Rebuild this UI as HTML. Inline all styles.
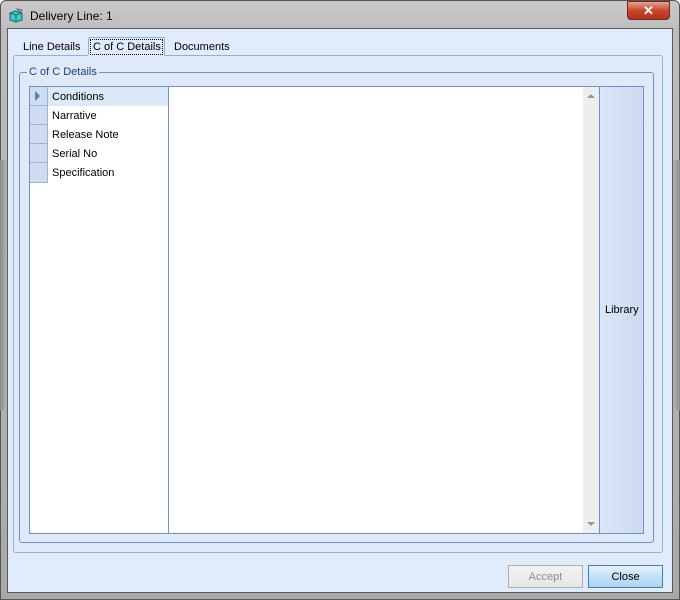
<!DOCTYPE html>
<html><head><style>
*{margin:0;padding:0;box-sizing:border-box}
body{width:680px;height:600px;background:#fff;font-family:"Liberation Sans",sans-serif;font-size:11px;color:#000;position:relative;overflow:hidden}
.abs{position:absolute}
</style></head><body>
<div class="abs" style="left:0;top:0;width:680px;height:600px;background:linear-gradient(#c9c9c9,#bdbdbd 30px,#a9a9a9);border:1px solid #555;border-radius:6px 6px 0 0"></div>
<div class="abs" style="left:0;top:160px;width:8px;height:250px;background:linear-gradient(90deg,#8a8a8a,#bcbcbc)"></div>
<div class="abs" style="left:672px;top:160px;width:8px;height:250px;background:linear-gradient(90deg,#bcbcbc,#8a8a8a)"></div>
<svg class="abs" style="left:8px;top:7px" width="16" height="16" viewBox="0 0 16 16"><path d="M2 6 L7 4 L14 6 L14 13 L8 15 L2 13Z" fill="#3cc9c9" stroke="#1a6b6b"/><path d="M2 6 L8 8 L14 6 M8 8 L8 15" fill="none" stroke="#1a6b6b"/><path d="M9 2 L14 3 L12 5Z" fill="#ddd" stroke="#666"/></svg>
<div class="abs" style="left:30px;top:9px;font-size:12px">Delivery Line: 1</div>
<div class="abs" style="left:627px;top:1px;width:43px;height:19px;background:linear-gradient(#e8a493,#c8462c 50%,#b8301a);border:1px solid #6d2a1e;border-radius:0 0 4px 4px;color:#fff;font-weight:bold;font-size:13px;text-align:center;line-height:17px">✕</div>
<div class="abs" style="left:7px;top:28px;width:666px;height:565px;border:1px solid #5a5a5a;background:#e0ebfb"></div>
<div class="abs" style="left:23px;top:41px">Line Details</div>
<div class="abs" style="left:88px;top:37px;width:77px;height:19px;background:#e0ebfb;border:1px solid #8eb0dd;border-bottom:none;border-radius:2px 2px 0 0"></div>
<div class="abs" style="left:90px;top:39px;width:73px;height:16px;border:1px dotted #000"></div>
<div class="abs" style="left:93px;top:41px">C of C Details</div>
<div class="abs" style="left:174px;top:41px">Documents</div>
<div class="abs" style="left:13px;top:55px;width:650px;height:498px;border:1px solid #8eb0dd;border-radius:3px;background:#dfe9f8"></div>
<div class="abs" style="left:88px;top:55px;width:76px;height:1px;background:#e0ebfb"></div>
<div class="abs" style="left:19px;top:72px;width:635px;height:471px;border:1px solid #6a93cf;border-radius:3px"></div>
<div class="abs" style="left:27px;top:66px;padding:0 2px;background:#dfe9f8;color:#1e3f7a">C of C Details</div>
<div class="abs" style="left:29px;top:86px;width:615px;height:448px;border:1px solid #6a93cf;background:#fff"></div>
<div class="abs" style="left:168px;top:87px;width:1px;height:446px;background:#6a93cf"></div>
<div class="abs" style="left:30px;top:87px;width:138px;height:19px;background:#dde8f8"></div>
<div class="abs" style="left:30px;top:87px;width:18px;height:96px;background:#cfdcef"></div>
<div class="abs" style="left:47px;top:87px;width:1px;height:96px;background:#9ab4da"></div>
<div class="abs" style="left:30px;top:105px;width:18px;height:1px;background:#9ab4da"></div>
<div class="abs" style="left:30px;top:124px;width:18px;height:1px;background:#9ab4da"></div>
<div class="abs" style="left:30px;top:143px;width:18px;height:1px;background:#9ab4da"></div>
<div class="abs" style="left:30px;top:162px;width:18px;height:1px;background:#9ab4da"></div>
<div class="abs" style="left:30px;top:182px;width:18px;height:1px;background:#9ab4da"></div>
<div class="abs" style="left:35px;top:91px;width:0;height:0;border-left:5px solid #5a7fb8;border-top:5px solid transparent;border-bottom:5px solid transparent"></div>
<div class="abs" style="left:52px;top:91px">Conditions</div>
<div class="abs" style="left:52px;top:110px">Narrative</div>
<div class="abs" style="left:52px;top:129px">Release Note</div>
<div class="abs" style="left:52px;top:148px">Serial No</div>
<div class="abs" style="left:52px;top:167px">Specification</div>
<div class="abs" style="left:583px;top:87px;width:16px;height:446px;background:#eee"></div>
<div class="abs" style="left:587px;top:94px;border-left:4px solid transparent;border-right:4px solid transparent;border-bottom:4px solid #999"></div>
<div class="abs" style="left:587px;top:522px;border-left:4px solid transparent;border-right:4px solid transparent;border-top:4px solid #999"></div>
<div class="abs" style="left:599px;top:87px;width:1px;height:446px;background:#6a93cf"></div>
<div class="abs" style="left:600px;top:87px;width:43px;height:446px;background:linear-gradient(90deg,#dbe6f6,#cbdaf0)"></div>
<div class="abs" style="left:605px;top:304px">Library</div>
<div class="abs" style="left:508px;top:565px;width:75px;height:23px;border:1px solid #adadad;background:linear-gradient(#f2f2f2,#e6e6e6);color:#8d8d8d;text-align:center;line-height:22px">Accept</div>
<div class="abs" style="left:588px;top:565px;width:75px;height:23px;border:1px solid #3c7fb1;background:linear-gradient(#e5f1fb,#c4e0f7 50%,#b0d4f3);text-align:center;line-height:22px">Close</div>
</body></html>
